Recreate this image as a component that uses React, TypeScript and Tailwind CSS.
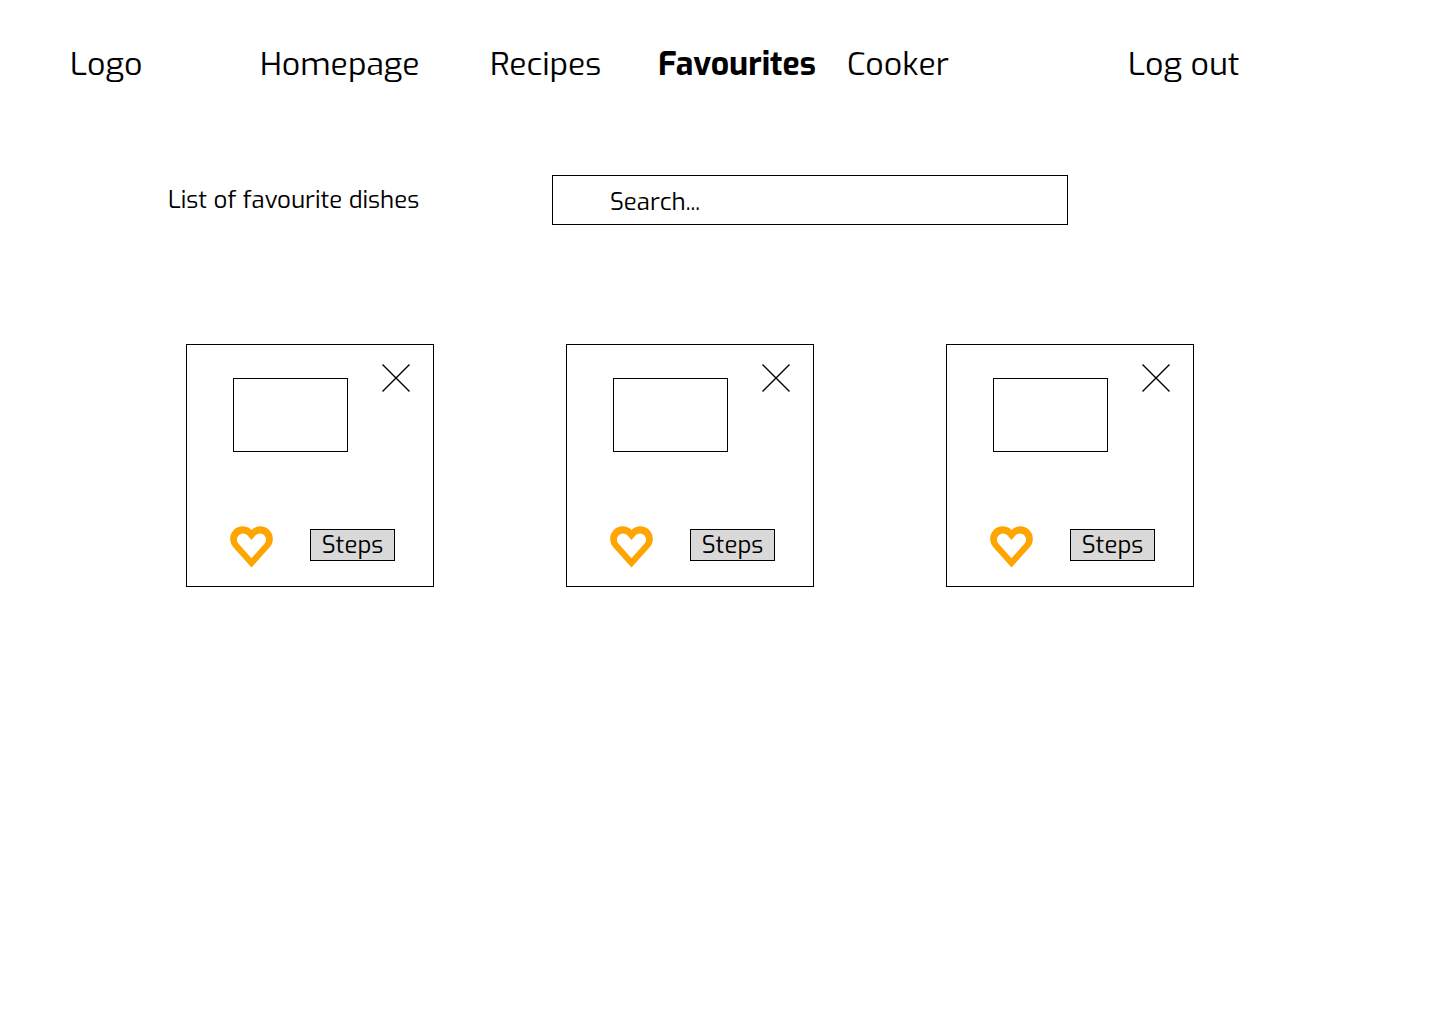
const navItems = ["Homepage", "Recipes", "Favourites", "Cooker", "Log out"];
const dishes = [1, 2, 3];

function HeartIcon() {
  return (
    <svg viewBox="0 0 43 42" className="h-[42px] w-[43px]" fill="#ffa500" fillRule="evenodd" aria-hidden="true">
      <path d="M21.5 41.5 3.8 21.7A12.2 12.2 0 0 1 21.5 4 12.2 12.2 0 0 1 39.2 21.7ZM21.5 32.3 34.4 17.8A6.1 6.1 0 0 0 25.6 9.3L21.5 14 17.4 9.3A6.1 6.1 0 0 0 8.6 17.8Z" />
    </svg>
  );
}

function CrossIcon() {
  return (
    <svg viewBox="0 0 28 28" className="size-7" fill="none" stroke="black" strokeWidth="1.4" aria-hidden="true">
      <path d="M.5.5l27 27M27.5.5l-27 27" />
    </svg>
  );
}

function DishCard() {
  return (
    <article className="w-[248px] border border-black pt-[19px] pr-[23px] pb-[18px] pl-[46px]">
      <div className="flex items-start justify-between">
        <div className="mt-[14px] h-[74px] w-[115px] border border-black" />
        <button type="button" aria-label="Remove dish">
          <CrossIcon />
        </button>
      </div>
      <div className="mt-[74px] -ml-[3px] flex items-start gap-[37px]">
        <button type="button" aria-label="Favourite">
          <HeartIcon />
        </button>
        <button
          type="button"
          className="mt-[3px] h-8 w-[85px] border border-black bg-[#d9d9d9] text-center text-2xl leading-[30px]"
        >
          Steps
        </button>
      </div>
    </article>
  );
}

export default function App() {
  return (
    <div className="min-h-screen bg-white font-['Exo','Exo_2','Roboto',sans-serif] text-black">
      <header className="pt-11 pl-[70px]">
        <nav className="grid grid-cols-[190fr_230fr_168fr_189fr_281fr_312fr] text-[32px] leading-10">
          <a href="#">Logo</a>
          {navItems.map((item) => (
            <a
              key={item}
              href="#"
              aria-current={item === "Favourites" ? "page" : undefined}
              className={item === "Favourites" ? "font-bold" : "whitespace-nowrap"}
            >
              {item}
            </a>
          ))}
        </nav>
      </header>
      <main>
        <section className="mt-[91px] grid grid-cols-[384fr_516fr_372fr] items-center pl-[168px] text-2xl">
          <label htmlFor="search">List of favourite dishes</label>
          <input
            id="search"
            type="text"
            placeholder="Search..."
            className="h-[50px] w-full border border-black pt-1 pl-[57px] placeholder:text-black placeholder:opacity-100"
          />
        </section>
        <section className="mt-[119px] grid grid-cols-3 pr-[114px] pl-[186px]">
          {dishes.map((id) => (
            <DishCard key={id} />
          ))}
        </section>
      </main>
    </div>
  );
}
